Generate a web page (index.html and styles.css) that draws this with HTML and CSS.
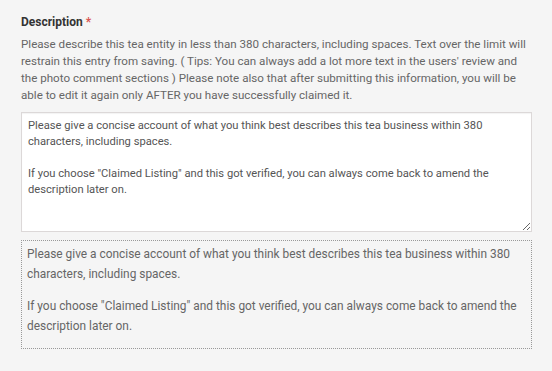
FILE: index.html
```html
<!DOCTYPE html>
<html lang="en">
<head>
    <meta charset="UTF-8">
    <title>Description</title>
    <link rel="stylesheet" href="styles.css">
</head>
<body>
    <div class="form-group">
        <label for="description">Description <span class="required">*</span></label>
        <p class="help-text">Please describe this tea entity in less than 380 characters, including spaces. Text over the limit will restrain this entry from saving. ( Tips: You can always add a lot more text in the users' review and the photo comment sections ) Please note also that after submitting this information, you will be able to edit it again only AFTER you have successfully claimed it.</p>
        <textarea id="description" rows="7">Please give a concise account of what you think best describes this tea business within 380 characters, including spaces.

If you choose "Claimed Listing" and this got verified, you can always come back to amend the description later on.</textarea>
        <div class="preview">
            <p>Please give a concise account of what you think best describes this tea business within 380 characters, including spaces.</p>
            <p>If you choose "Claimed Listing" and this got verified, you can always come back to amend the description later on.</p>
        </div>
    </div>
</body>
</html>
```

FILE: styles.css
```css
* {
    margin: 0;
    padding: 0;
    box-sizing: border-box;
}

body {
    background: #f5f5f5;
    font-family: Roboto, "Noto Sans", sans-serif;
    color: #555;
    padding: 14px 21px;
}

.form-group {
    width: 511px;
}

label {
    display: block;
    font-size: 12px;
    font-weight: 700;
    color: #333;
    line-height: 16px;
    margin-bottom: 6px;
}

.required {
    color: #d9534f;
}

.help-text {
    font-size: 11.6px;
    line-height: 17px;
    color: #666;
    margin-bottom: 8px;
}

textarea {
    display: block;
    width: 100%;
    height: 120px;
    padding: 5px 6px;
    font-family: Roboto, sans-serif;
    font-size: 11.2px;
    line-height: 16px;
    color: #555;
    background: #fff;
    border: 1px solid #dcd8d8;
    box-shadow: inset 0 1px 1px rgba(0,0,0,0.05);
    resize: vertical;
}

.preview {
    margin-top: 8px;
    border: 1px dotted #999;
    padding: 3px 5px 12px;
    font-size: 11.9px;
    line-height: 20px;
    color: #666;
}

.preview p {
    margin-top: 12px;
}

.preview p:first-child {
    margin-top: 0;
}
```
